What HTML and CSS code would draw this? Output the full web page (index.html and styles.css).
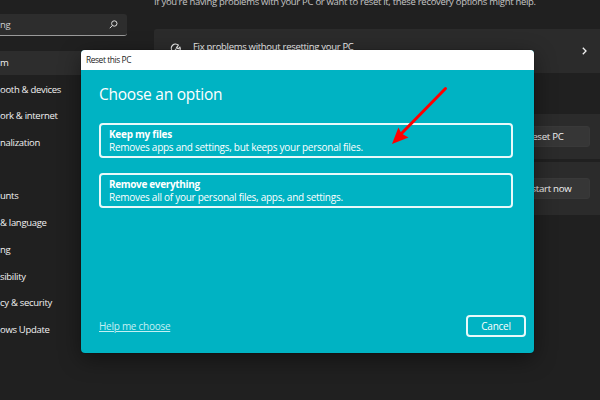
FILE: index.html
```
<!DOCTYPE html>
<html lang="en">
<head>
    <meta charset="UTF-8">
    <title>Reset this PC</title>
    <link rel="stylesheet" href="styles.css">
</head>
<body>
    <div class="settings">
        <div class="sidebar">
            <div class="search">
                <span>ng</span>
                <svg class="search-icon" viewBox="0 0 9 9">
                    <circle cx="5.3" cy="3.5" r="2.7"/>
                    <path d="M3.4 5.5L0.8 8.2"/>
                </svg>
            </div>
            <div class="nav">
                <div class="nav-item active">m</div>
                <div class="nav-item">ooth &amp; devices</div>
                <div class="nav-item">ork &amp; internet</div>
                <div class="nav-item">nalization</div>
                <div class="nav-item"></div>
                <div class="nav-item">unts</div>
                <div class="nav-item">&amp; language</div>
                <div class="nav-item">ng</div>
                <div class="nav-item">sibility</div>
                <div class="nav-item">cy &amp; security</div>
                <div class="nav-item">ows Update</div>
            </div>
        </div>
        <div class="main">
            <p class="intro">If you're having problems with your PC or want to reset it, these recovery options might help.</p>
            <div class="card fix">
                <svg class="fix-icon" viewBox="0 0 12 12">
                    <path d="M2.4 8A4 4 0 0 1 8.4 2.4M9.6 3.6A4 4 0 0 1 9.6 8M4 8.5l2.4-3M8.6 1.6L6.6 4.6l1.6 1.2L10.4 4"/>
                </svg>
                <span class="fix-title">Fix problems without resetting your PC</span>
                <svg class="chevron" viewBox="0 0 5 8">
                    <path d="M0.8 0.8L4 4L0.8 7.2"/>
                </svg>
            </div>
            <div class="card reset"><button class="card-btn reset-btn">Reset PC</button></div>
            <div class="card advanced"><button class="card-btn">Restart now</button></div>
        </div>
    </div>

    <div class="dialog">
        <div class="titlebar">Reset this PC</div>
        <div class="dialog-body">
            <h1>Choose an option</h1>
            <div class="option">
                <strong>Keep my files</strong>
                <span>Removes apps and settings, but keeps your personal files.</span>
            </div>
            <div class="option">
                <strong class="everything">Remove everything</strong>
                <span>Removes all of your personal files, apps, and settings.</span>
            </div>
            <div class="footer">
                <a class="help">Help me choose</a>
                <button class="cancel">Cancel</button>
            </div>
        </div>
    </div>

    <svg class="arrow" viewBox="0 0 60 62">
        <path class="arrow-line" d="M55.5 5.5L11 51"/>
        <path class="arrow-head" d="M2 61L8.4 44.5L11.5 50.5L18.5 54.5Z"/>
    </svg>
</body>
</html>
```

FILE: styles.css
```
* {
    box-sizing: border-box;
}
body {
    margin: 0;
    width: 600px;
    height: 400px;
    overflow: hidden;
    background-color: #202020;
    color: #f2f2f2;
    font-family: "Open Sans", "Noto Sans", sans-serif;
    font-size: 9.5px;
    letter-spacing: -0.3px;
}
button {
    font-family: inherit;
    letter-spacing: inherit;
    padding: 0;
}
.settings {
    display: flex;
    height: 400px;
}
.sidebar {
    width: 154px;
    padding-top: 14px;
    flex-shrink: 0;
}
.search {
    display: flex;
    align-items: center;
    justify-content: space-between;
    width: 127px;
    height: 22px;
    padding-right: 9px;
    background-color: #2d2d2d;
    border-bottom: 1px solid #9a9a9a;
    border-radius: 0 3px 3px 0;
    color: #cfcfcf;
}
.search-icon {
    width: 9px;
    height: 9px;
    fill: none;
    stroke: #e0e0e0;
    stroke-width: 1;
}
.nav {
    display: flex;
    flex-direction: column;
    gap: 2.7px;
    margin-top: 14.5px;
}
.nav-item {
    display: flex;
    align-items: center;
    height: 24px;
    width: 127px;
    white-space: nowrap;
}
.nav-item.active {
    background-color: #2d2d2d;
    border-radius: 0 3px 3px 0;
}
.main {
    flex: 1;
}
.intro {
    height: 14px;
    margin: -5px 0 20px;
    line-height: 14px;
    white-space: nowrap;
    color: #c5c5c5;
}
.card {
    display: flex;
    background-color: #2b2b2b;
    border-radius: 3px 0 0 3px;
}
.fix {
    align-items: flex-start;
    height: 44px;
    padding-left: 16px;
}
.fix-icon {
    width: 12px;
    height: 12px;
    margin: 14px 11px 0 0;
    fill: none;
    stroke: #eee;
    stroke-width: 1.2;
}
.fix-title {
    flex: 1;
    margin-top: 11px;
    line-height: 14px;
    white-space: nowrap;
}
.chevron {
    width: 5px;
    height: 8px;
    margin: 18px 13px 0 0;
    fill: none;
    stroke: #f2f2f2;
    stroke-width: 1.3;
}
.reset {
    justify-content: flex-end;
    height: 45px;
    margin-top: 41px;
    padding: 12px 10px 0 0;
}
.advanced {
    justify-content: flex-end;
    height: 53px;
    margin-top: 3px;
    padding: 16px 10px 0 0;
}
.card-btn {
    width: 75px;
    height: 21px;
    border: 1px solid #393939;
    border-radius: 3px;
    background-color: #363636;
    color: #f2f2f2;
    font-size: 9.7px;
    line-height: 17px;
    padding-right: 13px;
}
.reset-btn {
    padding-right: 15px;
}
.dialog {
    position: absolute;
    left: 80.5px;
    top: 50px;
    width: 453.5px;
    height: 303px;
    border-radius: 4px;
    overflow: hidden;
    background-color: #00b3c3;
    box-shadow: 0 6px 22px rgba(0, 0, 0, 0.45), 0 0 1px #000;
    color: #fff;
    font-size: 10px;
    letter-spacing: -0.27px;
}
.titlebar {
    height: 20px;
    padding-left: 5.5px;
    background-color: #fff;
    color: #222;
    font-size: 8.4px;
    letter-spacing: -0.42px;
    line-height: 19px;
}
.dialog-body {
    display: flex;
    flex-direction: column;
    height: 283px;
    padding: 13px 8px 16.5px 18.5px;
}
h1 {
    margin: 0 0 17.5px;
    font-size: 15.5px;
    font-weight: 400;
    letter-spacing: -0.25px;
    line-height: 22px;
}
.option {
    display: flex;
    flex-direction: column;
    width: 414px;
    height: 35px;
    margin-bottom: 15.7px;
    padding: 3px 8px 2px;
    border: 2px solid #e8f9fa;
    border-radius: 4px;
    line-height: 13.3px;
    white-space: nowrap;
}
.everything {
    letter-spacing: -0.35px;
}
.footer {
    display: flex;
    align-items: center;
    justify-content: space-between;
    margin-top: auto;
}
.help {
    color: #c5f0f3;
    text-decoration: underline;
}
.cancel {
    width: 60px;
    height: 22px;
    border: 2px solid #e8f9fa;
    border-radius: 4px;
    background-color: transparent;
    color: #fff;
    font-size: 10px;
}
.arrow {
    position: absolute;
    left: 390px;
    top: 83px;
    width: 60px;
    height: 62px;
}
.arrow-line {
    stroke: #f00;
    stroke-width: 3;
    stroke-linecap: round;
}
.arrow-head {
    fill: #f00;
}
```
